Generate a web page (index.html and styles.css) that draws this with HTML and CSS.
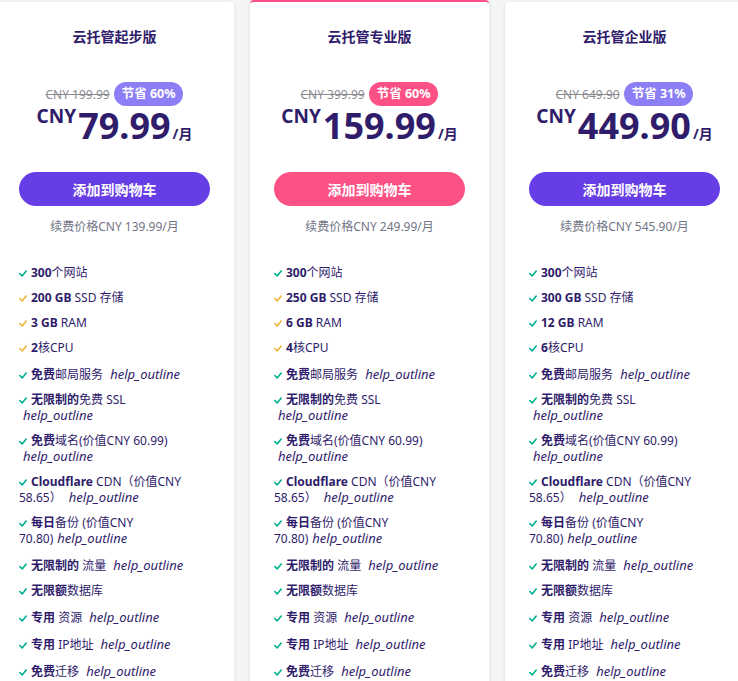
FILE: index.html
```html
<!DOCTYPE html>
<html lang="zh-CN">
<head>
  <meta charset="UTF-8">
  <meta name="viewport" content="width=device-width, initial-scale=1.0">
  <title>云托管套餐</title>
  <link rel="stylesheet" href="styles.css">
</head>
<body>
  <div class="plans">

    <!-- 起步版 -->
    <div class="card">
      <h3 class="card-title">云托管起步版</h3>
      <div class="old-row">
        <span class="old-price">CNY 199.99</span>
        <span class="badge">节省 60%</span>
      </div>
      <div class="price"><span class="cur">CNY</span><span class="amount">79.99</span><span class="per">/月</span></div>
      <button class="cart-btn">添加到购物车</button>
      <p class="renew">续费价格CNY 139.99/月</p>
      <ul class="features">
        <li><svg class="tick" viewBox="0 0 10 8"><polyline points="1,4 4,7 9,1"/></svg><b>300</b>个网站</li>
        <li><svg class="tick warn" viewBox="0 0 10 8"><polyline points="1,4 4,7 9,1"/></svg><b>200 GB</b> SSD 存储</li>
        <li><svg class="tick warn" viewBox="0 0 10 8"><polyline points="1,4 4,7 9,1"/></svg><b>3 GB</b> RAM</li>
        <li><svg class="tick warn" viewBox="0 0 10 8"><polyline points="1,4 4,7 9,1"/></svg><b>2</b>核CPU</li>
        <li class="tip-row"><svg class="tick" viewBox="0 0 10 8"><polyline points="1,4 4,7 9,1"/></svg><b>免费</b>邮局服务 <i class="help">help_outline</i></li>
        <li><svg class="tick" viewBox="0 0 10 8"><polyline points="1,4 4,7 9,1"/></svg><b>无限制的</b>免费 SSL <i class="help">help_outline</i></li>
        <li><svg class="tick" viewBox="0 0 10 8"><polyline points="1,4 4,7 9,1"/></svg><b>免费</b>域名(价值CNY 60.99) <i class="help">help_outline</i></li>
        <li><svg class="tick" viewBox="0 0 10 8"><polyline points="1,4 4,7 9,1"/></svg><b>Cloudflare</b> CDN（价值CNY 58.65） <i class="help">help_outline</i></li>
        <li><svg class="tick" viewBox="0 0 10 8"><polyline points="1,4 4,7 9,1"/></svg><b>每日</b>备份 (价值CNY <span class="nowrap">70.80)<i class="help">help_outline</i></span></li>
        <li class="tip-row"><svg class="tick" viewBox="0 0 10 8"><polyline points="1,4 4,7 9,1"/></svg><b>无限制的</b> 流量 <i class="help">help_outline</i></li>
        <li><svg class="tick" viewBox="0 0 10 8"><polyline points="1,4 4,7 9,1"/></svg><b>无限额</b>数据库</li>
        <li class="tip-row"><svg class="tick" viewBox="0 0 10 8"><polyline points="1,4 4,7 9,1"/></svg><b>专用</b> 资源 <i class="help">help_outline</i></li>
        <li class="tip-row"><svg class="tick" viewBox="0 0 10 8"><polyline points="1,4 4,7 9,1"/></svg><b>专用</b> IP地址 <i class="help">help_outline</i></li>
        <li class="tip-row"><svg class="tick" viewBox="0 0 10 8"><polyline points="1,4 4,7 9,1"/></svg><b>免费</b>迁移 <i class="help">help_outline</i></li>
      </ul>
    </div>

    <!-- 专业版 -->
    <div class="card card-featured">
      <h3 class="card-title">云托管专业版</h3>
      <div class="old-row">
        <span class="old-price">CNY 399.99</span>
        <span class="badge badge-pink">节省 60%</span>
      </div>
      <div class="price"><span class="cur">CNY</span><span class="amount">159.99</span><span class="per">/月</span></div>
      <button class="cart-btn cart-btn-pink">添加到购物车</button>
      <p class="renew">续费价格CNY 249.99/月</p>
      <ul class="features">
        <li><svg class="tick" viewBox="0 0 10 8"><polyline points="1,4 4,7 9,1"/></svg><b>300</b>个网站</li>
        <li><svg class="tick warn" viewBox="0 0 10 8"><polyline points="1,4 4,7 9,1"/></svg><b>250 GB</b> SSD 存储</li>
        <li><svg class="tick warn" viewBox="0 0 10 8"><polyline points="1,4 4,7 9,1"/></svg><b>6 GB</b> RAM</li>
        <li><svg class="tick warn" viewBox="0 0 10 8"><polyline points="1,4 4,7 9,1"/></svg><b>4</b>核CPU</li>
        <li class="tip-row"><svg class="tick" viewBox="0 0 10 8"><polyline points="1,4 4,7 9,1"/></svg><b>免费</b>邮局服务 <i class="help">help_outline</i></li>
        <li><svg class="tick" viewBox="0 0 10 8"><polyline points="1,4 4,7 9,1"/></svg><b>无限制的</b>免费 SSL <i class="help">help_outline</i></li>
        <li><svg class="tick" viewBox="0 0 10 8"><polyline points="1,4 4,7 9,1"/></svg><b>免费</b>域名(价值CNY 60.99) <i class="help">help_outline</i></li>
        <li><svg class="tick" viewBox="0 0 10 8"><polyline points="1,4 4,7 9,1"/></svg><b>Cloudflare</b> CDN（价值CNY 58.65） <i class="help">help_outline</i></li>
        <li><svg class="tick" viewBox="0 0 10 8"><polyline points="1,4 4,7 9,1"/></svg><b>每日</b>备份 (价值CNY <span class="nowrap">70.80)<i class="help">help_outline</i></span></li>
        <li class="tip-row"><svg class="tick" viewBox="0 0 10 8"><polyline points="1,4 4,7 9,1"/></svg><b>无限制的</b> 流量 <i class="help">help_outline</i></li>
        <li><svg class="tick" viewBox="0 0 10 8"><polyline points="1,4 4,7 9,1"/></svg><b>无限额</b>数据库</li>
        <li class="tip-row"><svg class="tick" viewBox="0 0 10 8"><polyline points="1,4 4,7 9,1"/></svg><b>专用</b> 资源 <i class="help">help_outline</i></li>
        <li class="tip-row"><svg class="tick" viewBox="0 0 10 8"><polyline points="1,4 4,7 9,1"/></svg><b>专用</b> IP地址 <i class="help">help_outline</i></li>
        <li class="tip-row"><svg class="tick" viewBox="0 0 10 8"><polyline points="1,4 4,7 9,1"/></svg><b>免费</b>迁移 <i class="help">help_outline</i></li>
      </ul>
    </div>

    <!-- 企业版 -->
    <div class="card">
      <h3 class="card-title">云托管企业版</h3>
      <div class="old-row">
        <span class="old-price">CNY 649.90</span>
        <span class="badge">节省 31%</span>
      </div>
      <div class="price"><span class="cur">CNY</span><span class="amount">449.90</span><span class="per">/月</span></div>
      <button class="cart-btn">添加到购物车</button>
      <p class="renew">续费价格CNY 545.90/月</p>
      <ul class="features">
        <li><svg class="tick" viewBox="0 0 10 8"><polyline points="1,4 4,7 9,1"/></svg><b>300</b>个网站</li>
        <li><svg class="tick" viewBox="0 0 10 8"><polyline points="1,4 4,7 9,1"/></svg><b>300 GB</b> SSD 存储</li>
        <li><svg class="tick" viewBox="0 0 10 8"><polyline points="1,4 4,7 9,1"/></svg><b>12 GB</b> RAM</li>
        <li><svg class="tick" viewBox="0 0 10 8"><polyline points="1,4 4,7 9,1"/></svg><b>6</b>核CPU</li>
        <li class="tip-row"><svg class="tick" viewBox="0 0 10 8"><polyline points="1,4 4,7 9,1"/></svg><b>免费</b>邮局服务 <i class="help">help_outline</i></li>
        <li><svg class="tick" viewBox="0 0 10 8"><polyline points="1,4 4,7 9,1"/></svg><b>无限制的</b>免费 SSL <i class="help">help_outline</i></li>
        <li><svg class="tick" viewBox="0 0 10 8"><polyline points="1,4 4,7 9,1"/></svg><b>免费</b>域名(价值CNY 60.99) <i class="help">help_outline</i></li>
        <li><svg class="tick" viewBox="0 0 10 8"><polyline points="1,4 4,7 9,1"/></svg><b>Cloudflare</b> CDN（价值CNY 58.65） <i class="help">help_outline</i></li>
        <li><svg class="tick" viewBox="0 0 10 8"><polyline points="1,4 4,7 9,1"/></svg><b>每日</b>备份 (价值CNY <span class="nowrap">70.80)<i class="help">help_outline</i></span></li>
        <li class="tip-row"><svg class="tick" viewBox="0 0 10 8"><polyline points="1,4 4,7 9,1"/></svg><b>无限制的</b> 流量 <i class="help">help_outline</i></li>
        <li><svg class="tick" viewBox="0 0 10 8"><polyline points="1,4 4,7 9,1"/></svg><b>无限额</b>数据库</li>
        <li class="tip-row"><svg class="tick" viewBox="0 0 10 8"><polyline points="1,4 4,7 9,1"/></svg><b>专用</b> 资源 <i class="help">help_outline</i></li>
        <li class="tip-row"><svg class="tick" viewBox="0 0 10 8"><polyline points="1,4 4,7 9,1"/></svg><b>专用</b> IP地址 <i class="help">help_outline</i></li>
        <li class="tip-row"><svg class="tick" viewBox="0 0 10 8"><polyline points="1,4 4,7 9,1"/></svg><b>免费</b>迁移 <i class="help">help_outline</i></li>
      </ul>
    </div>

  </div>
</body>
</html>
```

FILE: styles.css
```css
body {
  margin: 0;
  background-color: #f4f5f7;
  font-family: "Noto Sans", "Noto Sans CJK SC", sans-serif;
  color: #2f1c6a;
  overflow: hidden;
}

.plans {
  display: flex;
  gap: 16px;
  margin-left: -5px;
  padding-top: 2px;
}

.card {
  flex: 0 0 239px;
  box-sizing: border-box;
  background: #fff;
  border-radius: 4px;
  box-shadow: 0 1px 4px rgba(0, 0, 0, 0.1);
  padding: 25px 24px 20px;
  text-align: center;
}

.card-featured {
  margin-top: -2px;
  border-top: 2px solid #fc5185;
}

.card-title {
  margin: 0;
  font-size: 14px;
  line-height: 20px;
  font-weight: 700;
}

.old-row {
  display: flex;
  justify-content: center;
  align-items: center;
  gap: 4px;
  height: 24px;
  margin-top: 35px;
}

.old-price {
  font-size: 12px;
  color: #8a8a90;
  text-decoration: line-through;
}

.badge {
  background-color: #8c7ff5;
  color: #fff;
  font-size: 12.5px;
  font-weight: 700;
  line-height: 24px;
  padding: 0 8px;
  border-radius: 12px;
}

.badge-pink {
  background-color: #fc5185;
}

.price {
  display: flex;
  justify-content: center;
  align-items: baseline;
  height: 40px;
}

.price .cur {
  align-self: flex-start;
  font-size: 19px;
  line-height: 20px;
  font-weight: 700;
  margin-right: 2px;
}

.price .amount {
  font-size: 36px;
  line-height: 40px;
  font-weight: 700;
}

.price .per {
  font-size: 14px;
  font-weight: 700;
  margin-left: 2px;
}

.cart-btn {
  display: block;
  width: 100%;
  height: 34px;
  margin-top: 26px;
  border: none;
  border-radius: 17px;
  background-color: #673de6;
  color: #fff;
  font-family: inherit;
  font-size: 14px;
  font-weight: 700;
  cursor: pointer;
}

.cart-btn-pink {
  background-color: #fc5185;
}

.renew {
  margin: 13px 0 0;
  font-size: 12px;
  line-height: 16px;
  color: #727586;
}

.features {
  list-style: none;
  margin: 30px 0 0;
  padding: 0;
  text-align: left;
  font-size: 12px;
  line-height: 16px;
}

.features li {
  margin-bottom: 9px;
}

.features li.tip-row {
  padding-top: 2px;
}

.features b {
  font-weight: 700;
}

.tick {
  width: 8px;
  height: 7px;
  margin-right: 4px;
  fill: none;
  stroke: #00b090;
  stroke-width: 2;
  stroke-linecap: round;
  stroke-linejoin: round;
}

.tick.warn {
  stroke: #f0b43c;
}

.nowrap {
  white-space: nowrap;
}

.help {
  margin-left: 4px;
  padding-right: 12px;
  font-size: 13px;
  line-height: 12px;
  font-style: italic;
}
```
